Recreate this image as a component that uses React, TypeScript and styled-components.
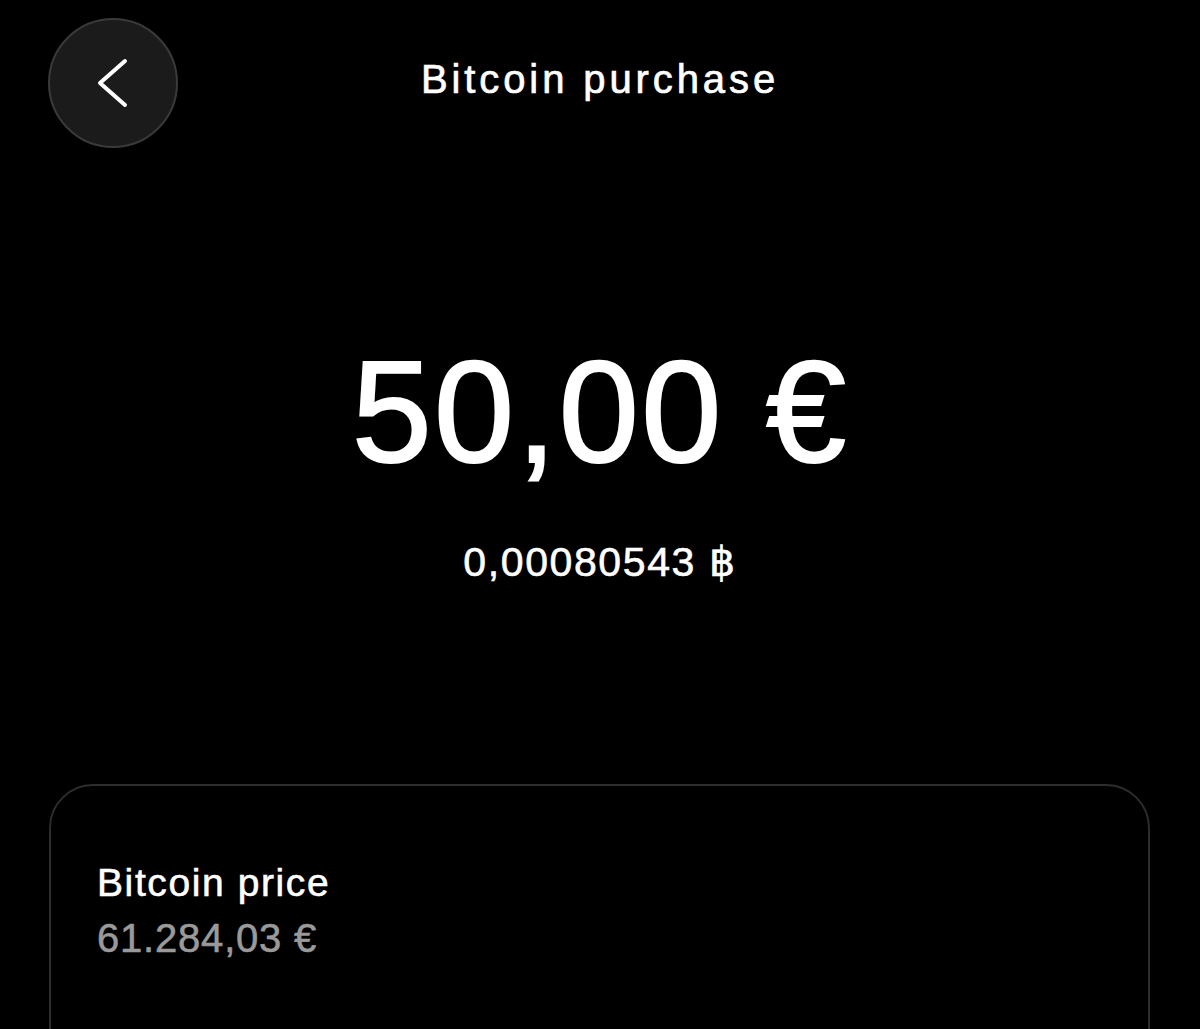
import React from 'react';
import styled, { createGlobalStyle } from 'styled-components';

const GlobalStyle = createGlobalStyle`
  html, body {
    margin: 0;
    padding: 0;
    background: #000;
    overflow: hidden;
  }
  body {
    font-family: "Liberation Sans", "DejaVu Sans", Arial, sans-serif;
    color: #fff;
  }
`;

const Screen = styled.div`
  display: flex;
  flex-direction: column;
  height: 100vh;
  overflow: hidden;
  background: #000;
`;

const Header = styled.header`
  display: grid;
  grid-template-columns: 130px 1fr 130px;
  align-items: center;
  padding: 18px 48px 0;
`;

const BackButton = styled.button`
  width: 130px;
  height: 130px;
  border-radius: 50%;
  background: #1b1b1b;
  border: 2px solid #3a3a3a;
  box-sizing: border-box;
  display: flex;
  align-items: center;
  justify-content: center;
  padding: 0;
  cursor: pointer;
`;

const Title = styled.h1`
  margin: 0 0 8px;
  text-align: center;
  font-size: 40px;
  line-height: 46px;
  font-weight: 400;
  letter-spacing: 3.9px;
  -webkit-text-stroke: 0.7px #fff;
  color: #fff;
`;

const AmountBlock = styled.section`
  display: flex;
  flex-direction: column;
  align-items: center;
  padding-top: 193px;
`;

const FiatAmount = styled.div`
  font-size: 144px;
  line-height: 144px;
  letter-spacing: 2.3px;
  -webkit-text-stroke: 2px #fff;
  color: #fff;
`;

const CryptoAmount = styled.div`
  margin-top: 57px;
  font-size: 41px;
  line-height: 41px;
  letter-spacing: 1.6px;
  -webkit-text-stroke: 0.6px #fff;
  color: #fff;
`;

const Card = styled.section`
  margin: 201px 50px 0 49px;
  min-height: 420px;
  border: 2px solid #2d2d2d;
  border-radius: 44px;
  padding: 73px 46px 0;
  box-sizing: border-box;
`;

const Label = styled.div`
  font-size: 39px;
  line-height: 47px;
  letter-spacing: 1.6px;
  -webkit-text-stroke: 0.6px #fff;
  color: #fff;
`;

const Value = styled.div<{ $muted?: boolean }>`
  margin-top: 8px;
  font-size: 40px;
  line-height: 48px;
  letter-spacing: 0.8px;
  color: ${(p) => (p.$muted ? '#9a9a9a' : '#fff')};
  -webkit-text-stroke: 0.6px ${(p) => (p.$muted ? '#9a9a9a' : '#fff')};
`;

const ChevronLeft = () => (
  <svg width="32" height="52" viewBox="0 0 32 52" fill="none">
    <path
      d="M28 4 L3 26 L28 48"
      stroke="#fff"
      strokeWidth="4"
      strokeLinecap="round"
      strokeLinejoin="round"
    />
  </svg>
);

export default function App(): JSX.Element {
  return (
    <Screen>
      <GlobalStyle />
      <Header>
        <BackButton aria-label="Back">
          <ChevronLeft />
        </BackButton>
        <Title>Bitcoin purchase</Title>
        <span />
      </Header>
      <AmountBlock>
        <FiatAmount>50,00 €</FiatAmount>
        <CryptoAmount>0,00080543 ฿</CryptoAmount>
      </AmountBlock>
      <Card>
        <Label>Bitcoin price</Label>
        <Value $muted>61.284,03 €</Value>
      </Card>
    </Screen>
  );
}
